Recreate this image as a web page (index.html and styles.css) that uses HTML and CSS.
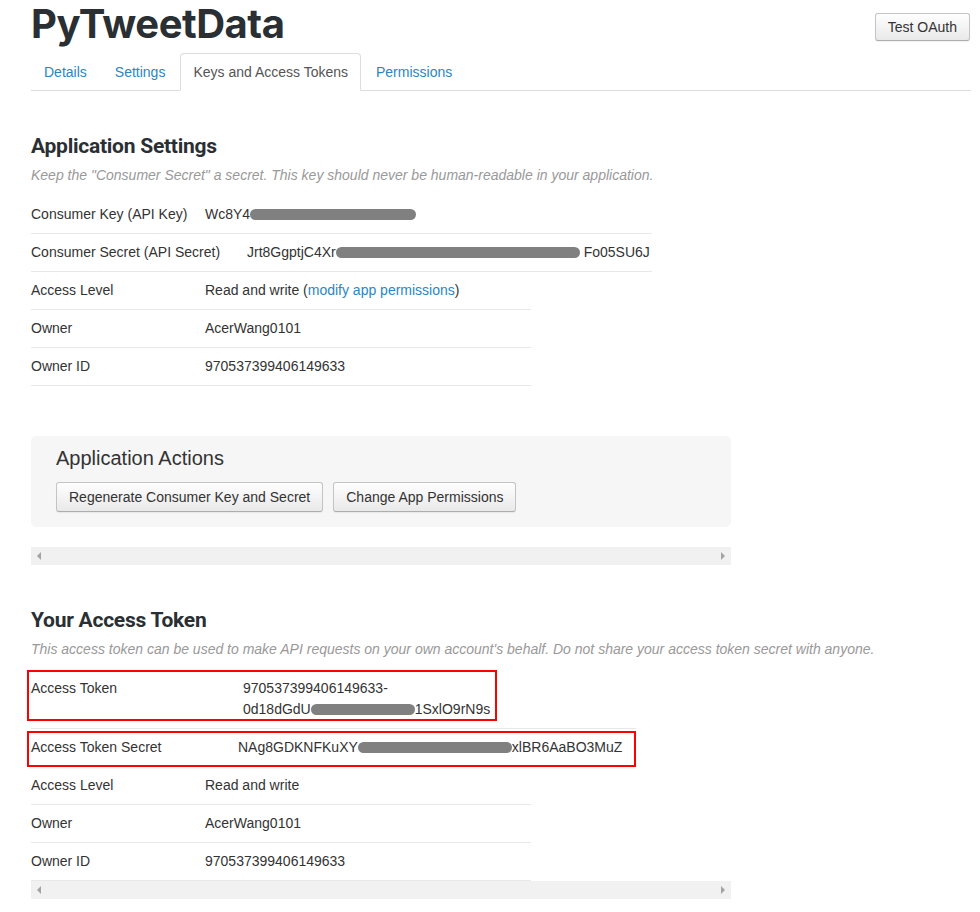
FILE: index.html
```html
<!DOCTYPE html>
<html lang="en">
<head>
<meta charset="utf-8">
<title>PyTweetData - Keys and Access Tokens</title>
<link rel="stylesheet" href="styles.css">
</head>
<body>
<div class="page">
  <header class="app-header">
    <h1 class="app-title">PyTweetData</h1>
    <button class="btn btn-oauth" type="button">Test OAuth</button>
  </header>

  <nav class="tabs">
    <a class="tab" href="#">Details</a>
    <a class="tab" href="#">Settings</a>
    <a class="tab tab-active" href="#">Keys and Access Tokens</a>
    <a class="tab" href="#">Permissions</a>
  </nav>

  <section class="section">
    <h2 class="section-title">Application Settings</h2>
    <p class="section-note">Keep the "Consumer Secret" a secret. This key should never be human-readable in your application.</p>

    <div class="kv kv-621">
      <div class="kv-row">
        <span class="kv-label lw-174">Consumer Key (API Key)</span>
        <span class="kv-value">Wc8Y4<span class="redact rd-key"></span></span>
      </div>
      <div class="kv-row">
        <span class="kv-label lw-216">Consumer Secret (API Secret)</span>
        <span class="kv-value">Jrt8GgptjC4Xr<span class="redact rd-secret"></span>Fo05SU6J</span>
      </div>
    </div>
    <div class="kv kv-500">
      <div class="kv-row">
        <span class="kv-label lw-174">Access Level</span>
        <span class="kv-value">Read and write (<a class="link" href="#">modify app permissions</a>)</span>
      </div>
      <div class="kv-row">
        <span class="kv-label lw-174">Owner</span>
        <span class="kv-value">AcerWang0101</span>
      </div>
      <div class="kv-row">
        <span class="kv-label lw-174">Owner ID</span>
        <span class="kv-value">970537399406149633</span>
      </div>
    </div>

    <div class="actions">
      <h3 class="actions-title">Application Actions</h3>
      <div class="actions-buttons">
        <button class="btn" type="button">Regenerate Consumer Key and Secret</button>
        <button class="btn" type="button">Change App Permissions</button>
      </div>
    </div>
    <div class="hscroll">
      <span class="arrow arrow-left"></span>
      <span class="arrow arrow-right"></span>
    </div>
  </section>

  <section class="section">
    <h2 class="section-title">Your Access Token</h2>
    <p class="section-note">This access token can be used to make API requests on your own account's behalf. Do not share your access token secret with anyone.</p>

    <div class="kv kv-605">
      <div class="kv-row kv-row-tall">
        <span class="kv-label lw-212">Access Token</span>
        <span class="kv-value">970537399406149633-<br>0d18dGdU<span class="redact rd-token"></span>1SxlO9rN9s</span>
      </div>
      <div class="kv-row">
        <span class="kv-label lw-207">Access Token Secret</span>
        <span class="kv-value">NAg8GDKNFKuXY<span class="redact rd-tsecret"></span>xlBR6AaBO3MuZ</span>
      </div>
    </div>
    <div class="kv kv-500">
      <div class="kv-row">
        <span class="kv-label lw-174">Access Level</span>
        <span class="kv-value">Read and write</span>
      </div>
      <div class="kv-row">
        <span class="kv-label lw-174">Owner</span>
        <span class="kv-value">AcerWang0101</span>
      </div>
      <div class="kv-row">
        <span class="kv-label lw-174">Owner ID</span>
        <span class="kv-value">970537399406149633</span>
      </div>
    </div>
    <div class="hscroll hscroll-tight">
      <span class="arrow arrow-left"></span>
      <span class="arrow arrow-right"></span>
    </div>
  </section>

  <div class="mark mark-token"></div>
  <div class="mark mark-secret"></div>
</div>
</body>
</html>
```

FILE: styles.css
```css
* { box-sizing: border-box; }

body {
  margin: 0;
  background: #fff;
  color: #333;
  font-family: "Liberation Sans", Arial, sans-serif;
  font-size: 14px;
  line-height: 20px;
}

.page {
  position: relative;
  width: 940px;
  margin-left: 31px;
}

/* header */
.app-header {
  display: flex;
  justify-content: space-between;
  align-items: flex-start;
  height: 48px;
}

.app-title {
  margin: 0;
  font-family: "Inter", "Liberation Sans", sans-serif;
  font-weight: 700;
  font-size: 40px;
  line-height: 48px;
  letter-spacing: -0.5px;
  color: #292f33;
}

.btn {
  font-family: "Liberation Sans", Arial, sans-serif;
  font-size: 14px;
  color: #333;
  height: 30px;
  padding: 0 12px;
  border: 1px solid #c4c4c4;
  border-bottom-color: #adadad;
  border-radius: 3px;
  background: linear-gradient(#fefefe, #e9e9e9);
  box-shadow: 0 1px 1px rgba(0, 0, 0, 0.06);
  cursor: pointer;
}

.btn-oauth {
  margin-top: 13px;
  margin-right: 1px;
  height: 28px;
}

/* tabs */
.tabs {
  display: flex;
  margin-top: 5px;
  border-bottom: 1px solid #ddd;
}

.tab {
  display: block;
  padding: 0 12px;
  margin-right: 2px;
  margin-bottom: -1px;
  line-height: 36px;
  border: 1px solid transparent;
  border-radius: 4px 4px 0 0;
  color: #2a86c4;
  text-decoration: none;
}

.tab-active {
  color: #555;
  background: #fff;
  border-color: #ddd #ddd transparent;
}

/* sections */
.section-title {
  margin: 42px 0 0;
  font-family: "Roboto", "Liberation Sans", sans-serif;
  font-weight: 700;
  font-size: 21px;
  line-height: 26px;
  letter-spacing: -0.25px;
  color: #292f33;
}

.section-note {
  margin: 6px 0 0;
  font-style: italic;
  color: #999;
}

.kv { margin-top: 11px; }
.kv + .kv { margin-top: 0; }
.kv-621 { width: 621px; }
.kv-605 { width: 605px; }
.kv-500 { width: 500px; }

.kv-row {
  display: flex;
  padding: 8px 0 9px;
  border-bottom: 1px solid #e8e8e8;
}
.kv-row-tall { line-height: 20.5px; }

.kv-label { flex-shrink: 0; }
.lw-174 { width: 174px; }
.lw-207 { width: 207px; }
.lw-212 { width: 212px; }
.lw-216 { width: 216px; }

.kv-value { white-space: nowrap; }

.link { color: #2a86c4; text-decoration: none; }

.redact {
  display: inline-block;
  height: 11px;
  vertical-align: -1px;
  background: #808080;
  border-radius: 6px;
}
.rd-key { width: 166px; }
.rd-secret { width: 244px; margin-right: 4px; }
.rd-token { width: 104px; }
.rd-tsecret { width: 154px; }

/* application actions */
.actions {
  width: 700px;
  margin-top: 50px;
  padding: 10px 25px 15px;
  background: #f6f6f6;
  border-radius: 5px;
}

.actions-title {
  margin: 0;
  font-weight: 400;
  font-size: 20px;
  line-height: 24px;
  color: #333;
}

.actions-buttons {
  display: flex;
  gap: 10px;
  margin-top: 12px;
}

/* fake horizontal scrollbars */
.hscroll {
  display: flex;
  justify-content: space-between;
  align-items: center;
  width: 700px;
  height: 18px;
  margin-top: 20px;
  padding: 0 6px;
  background: #f1f1f1;
}
.hscroll-tight { margin-top: 0; }

.arrow {
  width: 0;
  height: 0;
  border-top: 4px solid transparent;
  border-bottom: 4px solid transparent;
}
.arrow-left { border-right: 4px solid #a3a3a3; }
.arrow-right { border-left: 4px solid #a3a3a3; }

/* red annotation boxes drawn over the screenshot */
.mark {
  position: absolute;
  left: -4px;
  border: 2px solid #f00;
}
.mark-token { top: 670px; width: 470px; height: 51px; }
.mark-secret { top: 731px; width: 609px; height: 36px; }
```
